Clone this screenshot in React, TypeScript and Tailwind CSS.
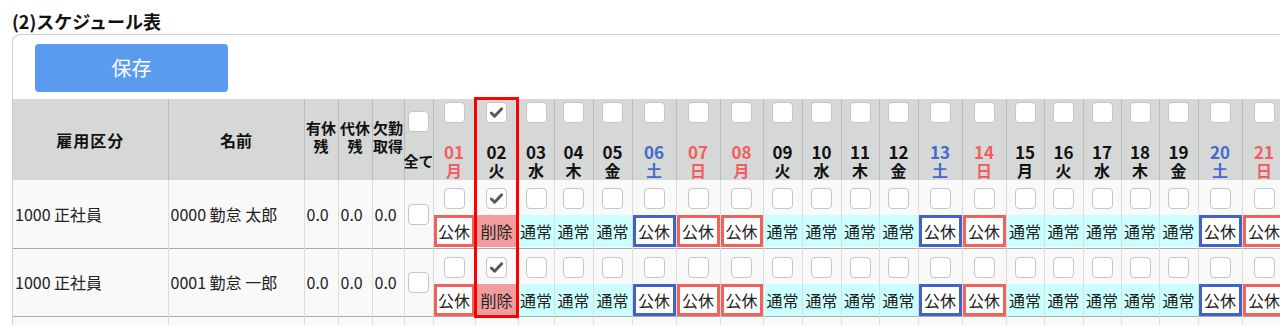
import React from 'react';

type Tone = 'red' | 'blue' | 'black';
type Shift = 'kyu' | 'kyuBlue' | 'del' | 'normal';

const days: { d: string; w: string; tone: Tone; shift: Shift; width: string }[] = [
  { d: '01', w: '月', tone: 'red', shift: 'kyu', width: 'w-[42px]' },
  { d: '02', w: '火', tone: 'black', shift: 'del', width: 'w-[43px]' },
  { d: '03', w: '水', tone: 'black', shift: 'normal', width: 'w-[36px]' },
  { d: '04', w: '木', tone: 'black', shift: 'normal', width: 'w-[39px]' },
  { d: '05', w: '金', tone: 'black', shift: 'normal', width: 'w-[39px]' },
  { d: '06', w: '土', tone: 'blue', shift: 'kyuBlue', width: 'w-[44px]' },
  { d: '07', w: '日', tone: 'red', shift: 'kyu', width: 'w-[44px]' },
  { d: '08', w: '月', tone: 'red', shift: 'kyu', width: 'w-[43px]' },
  { d: '09', w: '火', tone: 'black', shift: 'normal', width: 'w-[39px]' },
  { d: '10', w: '水', tone: 'black', shift: 'normal', width: 'w-[39px]' },
  { d: '11', w: '木', tone: 'black', shift: 'normal', width: 'w-[38px]' },
  { d: '12', w: '金', tone: 'black', shift: 'normal', width: 'w-[39px]' },
  { d: '13', w: '土', tone: 'blue', shift: 'kyuBlue', width: 'w-[44px]' },
  { d: '14', w: '日', tone: 'red', shift: 'kyu', width: 'w-[44px]' },
  { d: '15', w: '月', tone: 'black', shift: 'normal', width: 'w-[38px]' },
  { d: '16', w: '火', tone: 'black', shift: 'normal', width: 'w-[39px]' },
  { d: '17', w: '水', tone: 'black', shift: 'normal', width: 'w-[38px]' },
  { d: '18', w: '木', tone: 'black', shift: 'normal', width: 'w-[38px]' },
  { d: '19', w: '金', tone: 'black', shift: 'normal', width: 'w-[39px]' },
  { d: '20', w: '土', tone: 'blue', shift: 'kyuBlue', width: 'w-[44px]' },
  { d: '21', w: '日', tone: 'red', shift: 'kyu', width: 'w-[44px]' },
];

const staff = [
  { kubun: '1000 正社員', name: '0000 勤怠 太郎' },
  { kubun: '1000 正社員', name: '0001 勤怠 一郎' },
  { kubun: '1000 正社員', name: '0002 勤怠 次郎' },
];

const toneClass: Record<Tone, string> = {
  red: 'text-[#f25c5c]',
  blue: 'text-[#4569cf]',
  black: 'text-[#111]',
};

function Box({ checked = false }: { checked?: boolean }) {
  return (
    <span className="inline-flex h-[21px] w-[21px] items-center justify-center rounded-[4px] border border-[#c6c6c6] bg-white">
      {checked && (
        <svg viewBox="0 0 16 16" className="h-[15px] w-[15px]">
          <path d="M2.5 8.5 L6 12 L13.5 4" fill="none" stroke="#5a5a5a" strokeWidth="3.2" strokeLinecap="round" strokeLinejoin="round" />
        </svg>
      )}
    </span>
  );
}

function ShiftCell({ shift }: { shift: Shift }) {
  if (shift === 'kyu')
    return <div className="flex h-[32px] items-center justify-center border-[3px] border-[#f2625c] bg-white">公休</div>;
  if (shift === 'kyuBlue')
    return <div className="flex h-[32px] items-center justify-center border-[3px] border-[#3f63c6] bg-white">公休</div>;
  if (shift === 'del')
    return <div className="flex h-[32px] items-center justify-center bg-[#f29d9d]">削除</div>;
  return <div className="flex h-[32px] items-center justify-center bg-[#ccffff]">通常</div>;
}

function SmallHead({ top, bottom }: { top: string; bottom: string }) {
  return (
    <th className="whitespace-nowrap border-r border-[#bdbdbd] p-0 pb-[6px] text-[15px] leading-[18px]">
      <div className="flex flex-col items-center">
        <span>{top}</span>
        <span>{bottom}</span>
      </div>
    </th>
  );
}

export default function App() {
  return (
    <div className="h-[325px] w-[1280px] overflow-hidden bg-white font-['Noto_Sans_CJK_JP',sans-serif] text-[#222]">
      <h2 className="pl-[12px] pt-[9px] text-[18px] font-bold leading-[24px] text-[#111]">(2)スケジュール表</h2>

      <div className="ml-[12px] mt-[1px] w-max rounded-tl-lg border-l border-t border-[#cfcfcf]">
        <div className="pb-[7px] pl-[22px] pt-[9px]">
          <button type="button" className="h-[48px] w-[193px] rounded-[4px] bg-[#5a9bf0] text-[20px] text-white">
            保存
          </button>
        </div>

        <div className="relative">
          <table className="w-[1273px] table-fixed border-collapse text-[16px]">
            <colgroup>
              <col className="w-[155px]" />
              <col className="w-[136px]" />
              <col className="w-[34px]" />
              <col className="w-[34px]" />
              <col className="w-[32px]" />
              <col className="w-[29px]" />
              {days.map((d) => (
                <col key={d.d} className={d.width} />
              ))}
            </colgroup>
            <thead>
              <tr className="h-[81px] bg-[#d6d8d8] font-bold text-[#111]">
                <th className="border-r border-[#bdbdbd] p-0 tracking-[1px]">雇用区分</th>
                <th className="border-r border-[#bdbdbd] p-0">名前</th>
                <SmallHead top="有休" bottom="残" />
                <SmallHead top="代休" bottom="残" />
                <SmallHead top="欠勤" bottom="取得" />
                <th className="border-r border-[#bdbdbd] p-0 align-top">
                  <div className="flex h-[81px] flex-col items-center pt-[12px]">
                    <Box />
                    <span className="mt-[20px] whitespace-nowrap text-[15px] leading-[18px]">全て</span>
                  </div>
                </th>
                {days.map((d) => (
                  <th key={d.d} className="border-r border-[#bdbdbd] p-0 align-top">
                    <div className="flex h-[81px] flex-col items-center justify-between pt-[3px]">
                      <Box checked={d.d === '02'} />
                      <div className={`text-[16px] leading-[19px] ${toneClass[d.tone]}`}>
                        <div className="text-[17px]">{d.d}</div>
                        <div>{d.w}</div>
                      </div>
                    </div>
                  </th>
                ))}
              </tr>
            </thead>
            <tbody>
              {staff.map((s) => (
                <tr key={s.name} className="h-[68px] border-b border-[#a9a9a9] bg-[#f9f9f9]">
                  <td className="whitespace-nowrap border-r border-[#dcdcdc] p-0 pl-[2px]">{s.kubun}</td>
                  <td className="whitespace-nowrap border-r border-[#dcdcdc] p-0 pl-[2px]">{s.name}</td>
                  <td className="whitespace-nowrap border-r border-[#dcdcdc] p-0 pl-[2px]">0.0</td>
                  <td className="whitespace-nowrap border-r border-[#dcdcdc] p-0 pl-[2px]">0.0</td>
                  <td className="whitespace-nowrap border-r border-[#dcdcdc] p-0 pl-[2px]">0.0</td>
                  <td className="border-r border-[#dcdcdc] p-0 pt-[6px] text-center">
                    <Box />
                  </td>
                  {days.map((d) => (
                    <td key={d.d} className="border-r border-[#dcdcdc] p-0 align-top">
                      <div className="flex justify-center pt-[8px]">
                        <Box checked={d.d === '02'} />
                      </div>
                      <div className="mt-[6px] whitespace-nowrap text-[#222]">
                        <ShiftCell shift={d.shift} />
                      </div>
                    </td>
                  ))}
                </tr>
              ))}
            </tbody>
          </table>
          <div className="pointer-events-none absolute left-[461px] top-[-2px] h-[221px] w-[45px] border-[3px] border-[#ff0000]" />
        </div>
      </div>
    </div>
  );
}
